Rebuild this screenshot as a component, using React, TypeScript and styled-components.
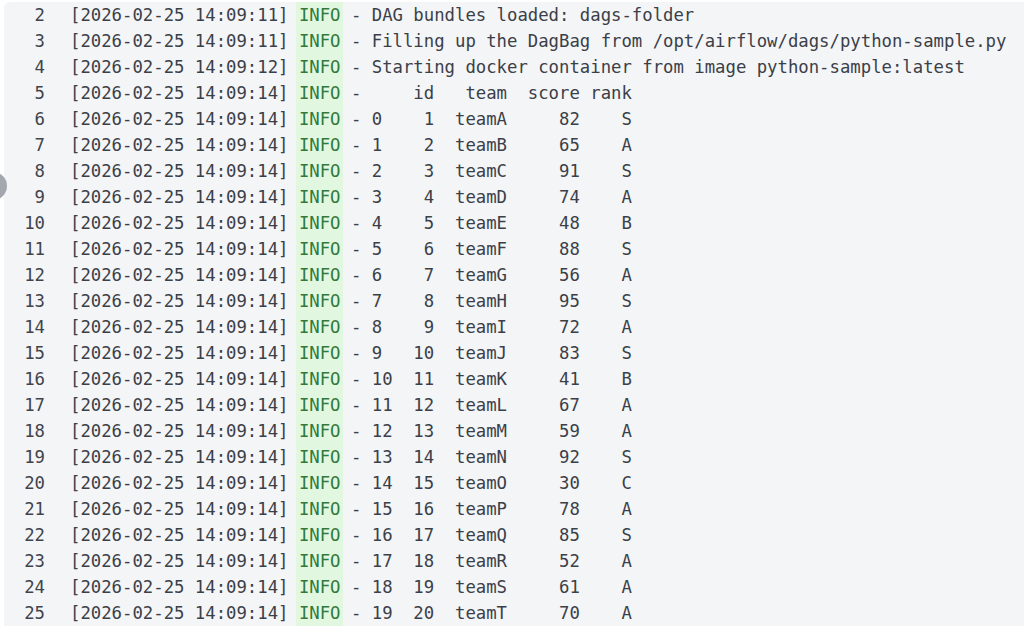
import React from "react";
import styled, { createGlobalStyle } from "styled-components";

const GlobalStyle = createGlobalStyle`
  html, body {
    margin: 0;
    padding: 0;
    background: #ffffff;
    overflow: hidden;
  }
  #root {
    width: 1024px;
    height: 626px;
    position: relative;
    overflow: hidden;
  }
`;

const Panel = styled.div`
  position: relative;
  margin: 2px 0 0 4px;
  height: 624px;
  background: #f4f5f7;
  border-top-left-radius: 6px;
  overflow: hidden;
`;

const Log = styled.div`
  display: flex;
  flex-direction: column;
  font-family: "DejaVu Sans Mono", "Liberation Mono", monospace;
  font-size: 17.3px;
  line-height: 26px;
  color: #3b4048;
`;

const Row = styled.div`
  display: flex;
  height: 26px;
  white-space: pre;
`;

const LineNo = styled.span`
  flex: none;
  width: 41px;
  text-align: right;
  padding-right: 25px;
  color: #3f444c;
`;

const Text = styled.span`
  flex: none;
`;

const Level = styled.span`
  display: inline-block;
  height: 26px;
  padding: 0 2.5px;
  margin: 0 -2.5px;
  background: #e2f7df;
  color: #2f7a3c;
`;

const Handle = styled.div`
  position: absolute;
  left: -21px;
  top: 172px;
  width: 28px;
  height: 28px;
  border-radius: 50%;
  background: #a3a7ae;
  filter: blur(0.6px);
`;

type Entry = { n: number; ts: string; msg: string };

const teams = [
  ["1", "teamA", "82", "S"],
  ["2", "teamB", "65", "A"],
  ["3", "teamC", "91", "S"],
  ["4", "teamD", "74", "A"],
  ["5", "teamE", "48", "B"],
  ["6", "teamF", "88", "S"],
  ["7", "teamG", "56", "A"],
  ["8", "teamH", "95", "S"],
  ["9", "teamI", "72", "A"],
  ["10", "teamJ", "83", "S"],
  ["11", "teamK", "41", "B"],
  ["12", "teamL", "67", "A"],
  ["13", "teamM", "59", "A"],
  ["14", "teamN", "92", "S"],
  ["15", "teamO", "30", "C"],
  ["16", "teamP", "78", "A"],
  ["17", "teamQ", "85", "S"],
  ["18", "teamR", "52", "A"],
  ["19", "teamS", "61", "A"],
  ["20", "teamT", "70", "A"],
];

const entries: Entry[] = [
  { n: 2, ts: "[2026-02-25 14:09:11]", msg: "DAG bundles loaded: dags-folder" },
  {
    n: 3,
    ts: "[2026-02-25 14:09:11]",
    msg: "Filling up the DagBag from /opt/airflow/dags/python-sample.py",
  },
  {
    n: 4,
    ts: "[2026-02-25 14:09:12]",
    msg: "Starting docker container from image python-sample:latest",
  },
  { n: 5, ts: "[2026-02-25 14:09:14]", msg: "    id   team  score rank" },
  ...teams.map(([id, team, score, rank], i) => ({
    n: 6 + i,
    ts: "[2026-02-25 14:09:14]",
    msg:
      String(i).padEnd(2) +
      "  " +
      id.padStart(2) +
      "  " +
      team.padStart(5) +
      "  " +
      score.padStart(5) +
      " " +
      rank.padStart(4),
  })),
];

export default function App() {
  return (
    <>
      <GlobalStyle />
      <Panel>
        <Log>
          {entries.map((e) => (
            <Row key={e.n}>
              <LineNo>{e.n}</LineNo>
              <Text>
                {e.ts + " "}
                <Level>INFO</Level>
                {" - " + e.msg}
              </Text>
            </Row>
          ))}
        </Log>
      </Panel>
      <Handle />
    </>
  );
}
